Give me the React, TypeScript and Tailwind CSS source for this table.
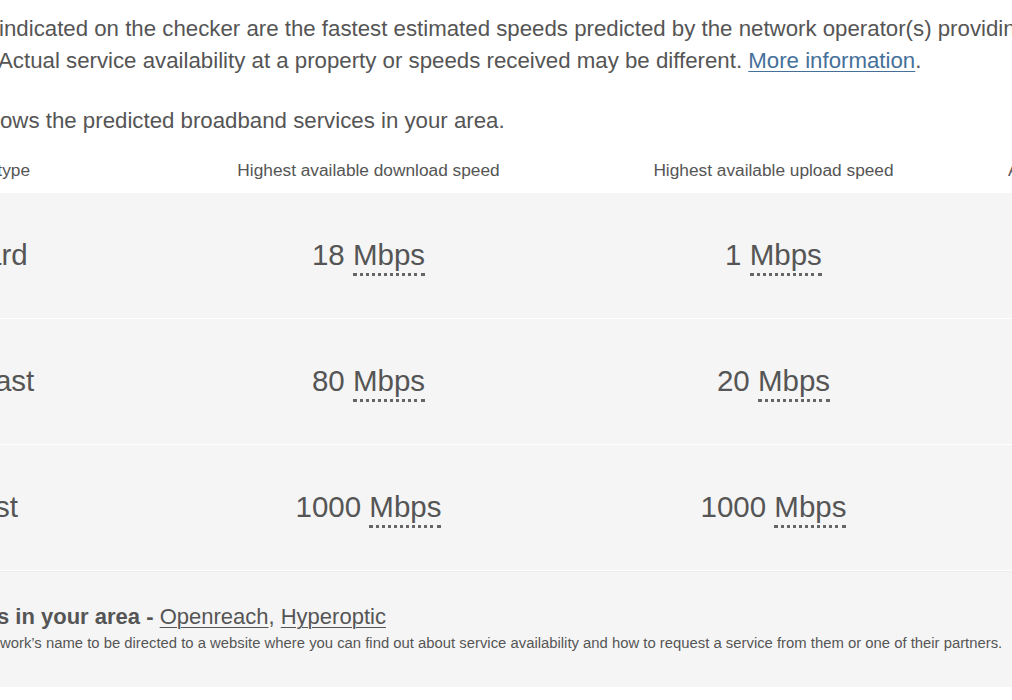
import React from 'react';

const ROWS = [
  {type: 'Standard', down: '18', up: '1'},
  {type: 'Superfast', down: '80', up: '20'},
  {type: 'Ultrafast', down: '1000', up: '1000'},
];

const Speed = ({value}: {value: string}) => (
  <span>
    {value}{' '}
    <abbr
      title="Megabits per second"
      className="no-underline border-b-[3px] border-dotted border-[#666] pb-[2px]"
    >
      Mbps
    </abbr>
  </span>
);

export default function App() {
  return (
    <div
      className="w-[1012px] h-[700px] overflow-hidden bg-white text-[#555]"
      style={{fontFamily: '"Liberation Sans", Arial, sans-serif'}}
    >
      <div className="pt-[13px] text-[22.25px] leading-[32px] whitespace-nowrap">
        <p className="-ml-[1px]">indicated on the checker are the fastest estimated speeds predicted by the network operator(s) providing</p>
        <p className="-ml-[2px]">
          Actual service availability at a property or speeds received may be different.{' '}
          <a href="#" className="text-[#45709a] underline underline-offset-[3px] decoration-1">More information</a>.
        </p>
        <p className="mt-[28px]">ows the predicted broadband services in your area.</p>
      </div>

      {/* table */}
      <div className="-ml-[92px] w-[1500px] mt-[20px]">
        <div className="flex h-[36px] text-[17.3px] leading-[24px] pt-[1px]">
          <div className="w-[258px]">Broadband type</div>
          <div className="w-[405px] text-center">Highest available download speed</div>
          <div className="w-[405px] text-center">Highest available upload speed</div>
          <div className="w-[405px] pl-[32px]">Availability</div>
        </div>
        {ROWS.map((r) => (
          <div
            key={r.type}
            className="flex items-center h-[126px] bg-[#f5f5f5] border-b border-white text-[29.5px] pb-[1px]"
          >
            <div className="w-[258px]">{r.type}</div>
            <div className="w-[405px] text-center"><Speed value={r.down} /></div>
            <div className="w-[405px] text-center"><Speed value={r.up} /></div>
            <div className="w-[405px]" />
          </div>
        ))}
      </div>

      <div className="h-[116px] bg-[#f5f5f5] border-t border-[#ececec] pt-[31px] whitespace-nowrap">
        <p className="text-[22px] leading-[28px] -ml-[3px]">
          <span className="font-bold">s in your area - </span>
          <a href="#" className="underline underline-offset-[3px] decoration-1">Openreach</a>,{' '}
          <a href="#" className="underline underline-offset-[3px] decoration-1">Hyperoptic</a>
        </p>
        <p className="text-[14.85px] leading-[20px] mt-[2px]">
          work’s name to be directed to a website where you can find out about service availability and how to request a service from them or one of their partners.
        </p>
      </div>
    </div>
  );
}
